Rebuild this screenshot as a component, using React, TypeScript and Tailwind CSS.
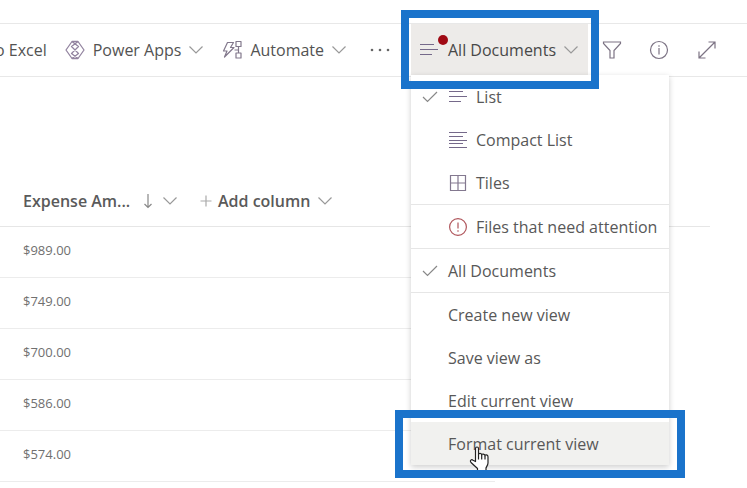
import type { ReactNode } from "react";

const amounts = ["$989.00", "$749.00", "$700.00", "$586.00", "$574.00"];

function ChevronDown({ className = "" }: { className?: string }) {
  return (
    <svg className={`shrink-0 text-[#999] ${className}`} width="16" height="10" viewBox="0 0 16 10" fill="none" stroke="currentColor" strokeWidth="1.2" aria-hidden="true">
      <path d="M1.500 1.500 8 8l6.500-6.500" />
    </svg>
  );
}

function PowerAppsIcon() {
  return (
    <svg width="20" height="20" viewBox="0 0 20 20" fill="none" stroke="#9384a0" strokeWidth="1.300" strokeLinejoin="round" aria-hidden="true">
      <path d="M7 1.500h6L19 10l-6 8.500H7L1 10z" />
      <path d="M7 1.500 13.500 6.500 6.500 13.500 13 18.500M13 1.500 6.500 6.500l7 7-6.500 5" />
    </svg>
  );
}

function FlowIcon() {
  return (
    <svg width="21" height="20" viewBox="0 0 21 20" fill="none" stroke="#82788c" strokeWidth="1.200" strokeLinejoin="round" aria-hidden="true">
      <path d="M5.500 2.500h6L8.500 7.500h3.500L2.500 17l2.500-6H1.500z" />
      <path d="M14 1.500h5v5h-5zM14 13h5v5h-5zM16.500 6.500V13M16.500 10H12.500" />
    </svg>
  );
}

function ListIcon() {
  return (
    <svg width="20" height="14" viewBox="0 0 20 14" fill="none" stroke="#75698a" strokeWidth="1.200" aria-hidden="true">
      <path d="M1 1.500h14M1 6.500h18M1 11.500h12" />
    </svg>
  );
}

function CompactListIcon() {
  return (
    <svg width="20" height="18" viewBox="0 0 20 18" fill="none" stroke="#75698a" strokeWidth="1.200" aria-hidden="true">
      <path d="M1 1.500h18M1 5.500h14M1 9.500h18M1 12.500h14M1 16.500h18" />
    </svg>
  );
}

function TilesIcon() {
  return (
    <svg width="18" height="18" viewBox="0 0 18 18" fill="none" stroke="#83788f" strokeWidth="1.200" aria-hidden="true">
      <path d="M1.500 1.500h15v15h-15zM9 1.500v15M1.500 9h15" />
    </svg>
  );
}

function AlertIcon() {
  return (
    <svg width="20" height="20" viewBox="0 0 20 20" fill="none" stroke="#b0565c" strokeWidth="1.200" aria-hidden="true">
      <circle cx="10" cy="10" r="8.400" />
      <path d="M10 5.500v6M10 13.200v1.600" />
    </svg>
  );
}

function CheckIcon() {
  return (
    <svg width="16" height="12" viewBox="0 0 16 12" fill="none" stroke="#888" strokeWidth="1.200" aria-hidden="true">
      <path d="m1 6 4.500 4.500L15 1" />
    </svg>
  );
}

function HandCursor() {
  return (
    <svg width="21" height="25" viewBox="0 0 21 25" fill="#fff" stroke="#222" strokeWidth="1.200" strokeLinejoin="round" aria-hidden="true">
      <path d="M6.500 15.500V2.500c0-2 3-2 3 0v6c0-1.500 3.200-1.500 3.200.5 0-1.500 3.300-1.300 3.300.8 0-1.400 3-1.200 3 .9v6.300c0 2-1.500 3.500-2 5V25H8.500v-2.500L2 16.500c-1.500-2 .5-3.500 2-2.300z" />
      <path d="M9.500 8.500v5M12.700 9v4.500M16 10v3.500" />
    </svg>
  );
}

type MenuItemProps = {
  label: string;
  icon?: ReactNode;
  checked?: boolean;
  className?: string;
  children?: ReactNode;
};

function MenuItem({ label, icon, checked, className = "", children }: MenuItemProps) {
  return (
    <button type="button" role="menuitem" className={`relative flex h-[43px] w-full items-center text-left ${className}`}>
      <span className="flex w-[37px] shrink-0 justify-center">{checked && <CheckIcon />}</span>
      {icon && <span className="mr-2 flex w-5 shrink-0 justify-center">{icon}</span>}
      <span className="whitespace-nowrap">{label}</span>
      {children}
    </button>
  );
}

function ViewMenu() {
  return (
    <div role="menu" className="absolute top-[51px] left-0 z-10 w-[258px] bg-white text-base text-[#585858] shadow-[0_2px_6px_rgba(0,0,0,0.2)]">
      <MenuItem label="List" icon={<ListIcon />} checked />
      <MenuItem label="Compact List" icon={<CompactListIcon />} />
      <MenuItem label="Tiles" icon={<TilesIcon />} />
      <div className="border-t border-[#e6e6e6]">
        <MenuItem label="Files that need attention" icon={<AlertIcon />} />
      </div>
      <div className="border-y border-[#e6e6e6]">
        <MenuItem label="All Documents" checked />
      </div>
      <MenuItem label="Create new view" />
      <MenuItem label="Save view as" />
      <MenuItem label="Edit current view" />
      <MenuItem label="Format current view" className="bg-[#f1f1ef]">
        <span className="absolute top-[24px] left-[58px]">
          <HandCursor />
        </span>
        <span className="pointer-events-none absolute -inset-x-4 -top-3 -bottom-[13px] border-8 border-[#1a73cb]" />
      </MenuItem>
    </div>
  );
}

function Toolbar() {
  return (
    <header className="flex h-[54px] items-center border-y border-[#e8e8e8] text-base text-[#535353]">
      <button type="button" className="-ml-[5px] whitespace-nowrap">o Excel</button>
      <button type="button" className="ml-[18px] flex items-center whitespace-nowrap">
        <PowerAppsIcon />
        <span className="ml-2">Power Apps</span>
        <ChevronDown className="ml-[7px]" />
      </button>
      <button type="button" className="ml-[18px] flex items-center whitespace-nowrap">
        <FlowIcon />
        <span className="ml-[7px]">Automate</span>
        <ChevronDown className="ml-[7px]" />
      </button>
      <button type="button" aria-label="More" className="ml-[23px]">
        <svg width="20" height="4" viewBox="0 0 20 4" fill="#666" aria-hidden="true">
          <circle cx="2" cy="2" r="1.300" />
          <circle cx="10" cy="2" r="1.300" />
          <circle cx="18" cy="2" r="1.300" />
        </svg>
      </button>

      <div className="ml-auto flex h-full items-center pr-[30px]">
        <div className="relative h-full w-[177px]">
          <button type="button" aria-haspopup="menu" aria-expanded="true" className="flex h-full w-full items-center bg-[#edebe9] pl-2 whitespace-nowrap text-[#484848]">
            <span className="relative">
              <ListIcon />
              <span className="absolute -top-2 left-[19px] size-[10px] rounded-full bg-[#a00a14]" />
            </span>
            <span className="ml-[9px]">All Documents</span>
            <ChevronDown className="ml-[7px]" />
          </button>
          <ViewMenu />
          <span className="pointer-events-none absolute -top-[14px] -right-[11px] -bottom-[13px] -left-[10px] z-20 border-8 border-[#1a73cb]" />
        </div>
        <button type="button" aria-label="Filter" className="ml-[14px]">
          <svg width="20" height="20" viewBox="0 0 20 20" fill="none" stroke="#7c7384" strokeWidth="1.200" aria-hidden="true">
            <path d="M1.500 2h17v1.500L12 10.500V18H8v-7.500L1.500 3.500z" />
          </svg>
        </button>
        <button type="button" aria-label="Details" className="ml-[27px]">
          <svg width="20" height="20" viewBox="0 0 20 20" fill="none" stroke="#7c7384" strokeWidth="1.200" aria-hidden="true">
            <circle cx="10" cy="10" r="8.500" />
            <path d="M10 8v6.500M10 5.200v1.500" />
          </svg>
        </button>
        <button type="button" aria-label="Expand" className="ml-7">
          <svg width="20" height="20" viewBox="0 0 20 20" fill="none" stroke="#7c7384" strokeWidth="1.200" aria-hidden="true">
            <path d="M2 18 18 2M11.500 2H18v6.500M2 11.500V18h6.500" />
          </svg>
        </button>
      </div>
    </header>
  );
}

function ExpenseTable() {
  return (
    <div className="pt-[99px] pr-[37px]">
      <table className="w-full table-fixed border-separate border-spacing-0 text-left">
        <thead className="text-base text-[#5a5a5a]">
          <tr className="h-[51px]">
            <th className="w-[188px] border-b border-[#e6e6e6] pl-[23px] font-semibold">
              <button type="button" className="flex items-center whitespace-nowrap">
                Expense Am...
                <svg className="ml-[13px]" width="10" height="16" viewBox="0 0 10 16" fill="none" stroke="#888" strokeWidth="1.200" aria-hidden="true">
                  <path d="M5 1v13.500M1.500 11 5 14.500 8.500 11" />
                </svg>
                <ChevronDown className="ml-[9px]" />
              </button>
            </th>
            <th className="w-[307px] border-b border-[#e6e6e6] pl-3 font-semibold">
              <button type="button" className="flex items-center whitespace-nowrap">
                <svg width="12" height="12" viewBox="0 0 12 12" stroke="#aaa" strokeWidth="1.200" aria-hidden="true">
                  <path d="M6 .5v11M.5 6h11" />
                </svg>
                <span className="ml-[6px]">Add column</span>
                <ChevronDown className="ml-[7px]" />
              </button>
            </th>
            <th className="border-b border-[#e6e6e6]" />
          </tr>
        </thead>
        <tbody className="text-[13px] text-[#707070]">
          {amounts.map((amount) => (
            <tr key={amount} className="h-[51px]">
              <td className="border-b border-[#ececec] pb-[3px] pl-[23px]">{amount}</td>
              <td className="border-b border-[#ececec]" />
            </tr>
          ))}
        </tbody>
      </table>
    </div>
  );
}

export default function App() {
  return (
    <main className="overflow-x-clip bg-white pt-[23px] font-['Open_Sans','Noto_Sans',sans-serif]">
      <Toolbar />
      <ExpenseTable />
    </main>
  );
}
